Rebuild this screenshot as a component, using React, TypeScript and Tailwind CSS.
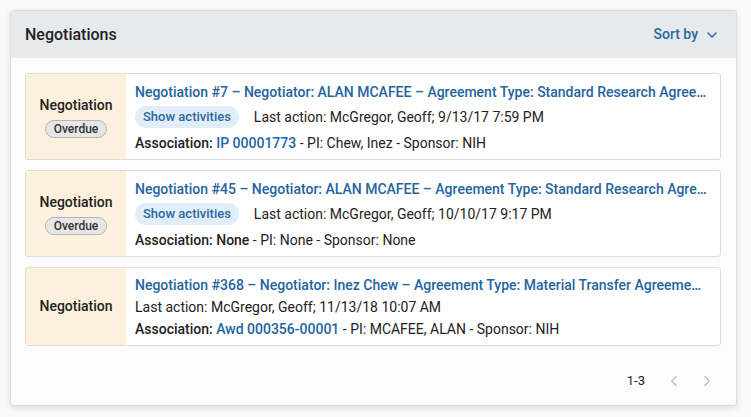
import {ChevronDown, ChevronLeft, ChevronRight} from 'lucide-react';

type Item = {
    id: number,
    negotiator: string,
    type: string,
    overdue: boolean,
    lastAction: string,
    association?: string,
    pi: string,
    sponsor: string
};

const items: Item[] = [
    {
        id: 7,
        negotiator: 'ALAN MCAFEE',
        type: 'Standard Research Agreement',
        overdue: true,
        lastAction: 'McGregor, Geoff; 9/13/17 7:59 PM',
        association: 'IP 00001773',
        pi: 'Chew, Inez',
        sponsor: 'NIH'
    },
    {
        id: 45,
        negotiator: 'ALAN MCAFEE',
        type: 'Standard Research Agreement',
        overdue: true,
        lastAction: 'McGregor, Geoff; 10/10/17 9:17 PM',
        pi: 'None',
        sponsor: 'None'
    },
    {
        id: 368,
        negotiator: 'Inez Chew',
        type: 'Material Transfer Agreement (Incoming)',
        overdue: false,
        lastAction: 'McGregor, Geoff; 11/13/18 10:07 AM',
        association: 'Awd 000356-00001',
        pi: 'MCAFEE, ALAN',
        sponsor: 'NIH'
    }
];

function NegotiationRow({item}: {item: Item}) {
    return (
        <div className="flex border border-[#dcdcdc] rounded-[3px] bg-white overflow-hidden">
            <div className="w-[100px] shrink-0 bg-[#fdf0dc] flex flex-col items-center justify-center">
                <div className="text-[14px] font-medium text-[#222]">Negotiation</div>
                {item.overdue && (
                    <span className="mt-[4px] px-[8px] h-[18px] leading-[16px] rounded-full border border-[#b5b5b5] bg-[#e6e6e6] text-[12px] font-medium text-[#333]">
                        Overdue
                    </span>
                )}
            </div>
            <div className={`flex-1 min-w-0 pl-[9px] pr-[12px] pb-[5px] text-[14px] text-[#222] ${item.overdue ? 'pt-[7px]' : 'pt-[6px]'}`}>
                <div className="truncate leading-[22px] font-medium text-[#1f65a0]">
                    Negotiation #{item.id} – Negotiator: {item.negotiator} – Agreement Type: {item.type}
                </div>
                {item.overdue ? (
                    <div className="flex items-center h-[26px] mt-[1px]">
                        <span className="px-[8px] h-[22px] leading-[22px] rounded-full bg-[#e1eef9] text-[13px] font-medium text-[#2b68a0]">
                            Show activities
                        </span>
                        <span className="ml-[15px]">Last action: {item.lastAction}</span>
                    </div>
                ) : (
                    <div className="leading-[22px]">Last action: {item.lastAction}</div>
                )}
                <div className={`leading-[22px] ${item.overdue ? 'mt-[2px]' : ''}`}>
                    <span className="font-medium">Association: </span>
                    {item.association ? (
                        <span className="font-medium text-[#1f65a0]">{item.association}</span>
                    ) : (
                        <span className="font-medium">None</span>
                    )}
                    {' '}- PI: {item.pi} - Sponsor: {item.sponsor}
                </div>
            </div>
        </div>
    );
}

export default function App() {
    return (
        <div className="min-h-[417px] w-[751px] bg-[#fafafa] pt-[10px] pl-[10px]" style={{fontFamily: 'Roboto, "Liberation Sans", sans-serif'}}>
            <div className="w-[727px] h-[396px] bg-[#fcfcfc] border border-[#dcdcdc] rounded-[3px] shadow-[0_2px_6px_rgba(0,0,0,0.12)] flex flex-col overflow-hidden">
                <div className="h-[47px] shrink-0 bg-[#e7eaed] flex items-center justify-between pl-[14px] pr-[16px]">
                    <h2 className="text-[16px] font-medium text-[#222]">Negotiations</h2>
                    <button className="flex items-center gap-[6px] text-[14px] font-medium text-[#2b68a0]">
                        Sort by
                        <ChevronDown className="h-4 w-4" strokeWidth={2.2}/>
                    </button>
                </div>
                <div className="flex flex-col gap-[10px] pt-[15px] pl-[14px] pr-[15px]">
                    {items.map(item => <NegotiationRow key={item.id} item={item}/>)}
                </div>
                <div className="flex items-center justify-end h-[20px] mt-[25px] pr-[20px]">
                    <span className="text-[13px] text-[#222]">1-3</span>
                    <ChevronLeft className="ml-[20px] h-[18px] w-[18px] text-[#bdbdbd]" strokeWidth={1.8}/>
                    <ChevronRight className="ml-[15px] h-[18px] w-[18px] text-[#bdbdbd]" strokeWidth={1.8}/>
                </div>
            </div>
        </div>
    );
}
